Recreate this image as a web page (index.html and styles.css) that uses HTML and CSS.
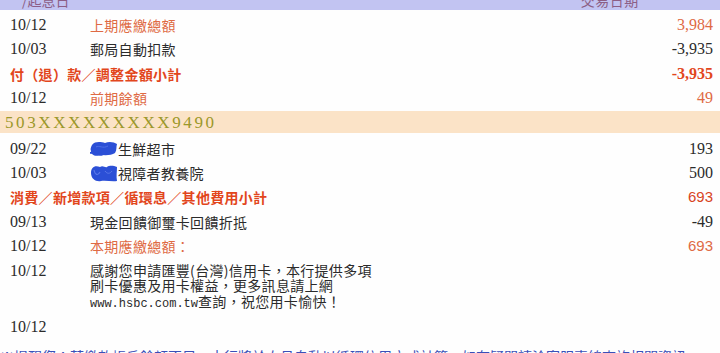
FILE: index.html
```html
<!DOCTYPE html>
<html lang="zh-Hant">
<head>
<meta charset="utf-8">
<link rel="stylesheet" href="styles.css">
</head>
<body>
<div class="head">
  <span class="head-a">/起息日</span>
  <span class="head-b">交易日期</span>
</div>
<div class="list">
  <div class="row"><span class="date">10/12</span><span class="desc hl">上期應繳總額</span><span class="amt hl">3,984</span></div>
  <div class="row"><span class="date">10/03</span><span class="desc">郵局自動扣款</span><span class="amt">-3,935</span></div>
  <div class="row sub"><span class="sub-label">付（退）款／調整金額小計</span><span class="amt sub-amt">-3,935</span></div>
  <div class="row"><span class="date">10/12</span><span class="desc hl">前期餘額</span><span class="amt hl">49</span></div>
</div>
<div class="card">503XXXXXXXXX9490</div>
<div class="list list-b">
  <div class="row"><span class="date">09/22</span><span class="desc"><svg class="blot" width="28" height="18" viewBox="0 0 28 18"><path d="M2 5 C5 1 11 2 15 3 C19 1 24 2 27 4 C26 7 27 10 25 13 C21 16 14 15 9 15 C6 17 1 15 1 11 C0 9 1 7 2 5 Z" fill="#2b4fd6"/><path d="M0 13 C4 11 7 17 13 14" stroke="#2b4fd6" stroke-width="2" fill="none"/><path d="M6 7 C9 5 13 9 18 6" stroke="#4d6ee6" stroke-width="1" fill="none"/></svg>生鮮超市</span><span class="amt">193</span></div>
  <div class="row"><span class="date">10/03</span><span class="desc"><svg class="blot" width="28" height="18" viewBox="0 0 28 18"><path d="M1 9 C1 3 5 1 10 3 C13 1 15 4 17 3 C20 1 24 2 27 3 C27 8 26 12 27 17 C22 18 16 16 11 17 C6 18 1 15 1 9 Z" fill="#2b4fd6"/><path d="M4 6 C5 11 8 12 10 8" stroke="#5a78e8" stroke-width="1.2" fill="none"/><path d="M15 7 C17 10 20 10 22 7" stroke="#5a78e8" stroke-width="1" fill="none"/></svg>視障者教養院</span><span class="amt">500</span></div>
  <div class="row sub"><span class="sub-label">消費／新增款項／循環息／其他費用小計</span><span class="amt sub-amt2">693</span></div>
  <div class="row"><span class="date">09/13</span><span class="desc">現金回饋御璽卡回饋折抵</span><span class="amt">-49</span></div>
  <div class="row"><span class="date">10/12</span><span class="desc hl">本期應繳總額：</span><span class="amt hl sans">693</span></div>
  <div class="row msg"><span class="date">10/12</span><span class="desc"><span class="line">感謝您申請匯豐(台灣)信用卡，本行提供多項</span><span class="line">刷卡優惠及用卡權益，更多訊息請上網</span><span class="line"><span class="mono">www.hsbc.com.tw</span>查詢，祝您用卡愉快！</span></span><span class="amt"></span></div>
  <div class="row"><span class="date">10/12</span><span class="desc"></span><span class="amt"></span></div>
</div>
<div class="note">※提醒您：若繳款帳戶餘額不足，本行將於次月自動以循環信用方式計算，如有疑問請洽客服專線查詢相關資訊。</div>
</body>
</html>
```

FILE: styles.css
```css
html, body {
  margin: 0;
  padding: 0;
  background: #fefefe;
  overflow: hidden;
  width: 720px;
  height: 353px;
}

body {
  font-family: "Liberation Serif", "Noto Sans CJK TC", serif;
  color: #2b2b2b;
}

.head {
  height: 10px;
  background: #c2c4f2;
  overflow: hidden;
  font-family: "Noto Sans CJK TC", sans-serif;
  font-size: 14px;
  color: #8c5f86;
}

.head-a,
.head-b {
  display: inline-block;
  line-height: 14px;
  margin-top: -7px;
  vertical-align: top;
}

.head-a {
  margin-left: 22px;
}

.head-b {
  margin-left: 508px;
  letter-spacing: 0.5px;
}

.list {
  padding-top: 3px;
}

.list-b {
  padding-top: 4px;
}

.row {
  display: grid;
  grid-template-columns: 80px 1fr auto;
  align-items: start;
  height: 24.4px;
  box-sizing: border-box;
  padding: 4px 7px 4px 10px;
  line-height: 16.4px;
}

.date {
  font-family: "Liberation Serif", serif;
  font-size: 16px;
}

.desc {
  font-family: "Noto Sans CJK TC", sans-serif;
  font-size: 14px;
  letter-spacing: 0.3px;
  display: flex;
  align-items: center;
  height: 16.4px;
}

.msg {
  height: auto;
  padding-top: 4px;
  padding-bottom: 6px;
}

.msg .desc {
  display: flex;
  flex-direction: column;
  align-items: flex-start;
  height: auto;
}

.line {
  display: block;
  height: 15.5px;
  line-height: 15.5px;
  white-space: nowrap;
}

.amt {
  font-family: "Liberation Serif", serif;
  font-size: 16px;
  text-align: right;
}

.hl {
  color: #df6a44;
}

.sub {
  grid-template-columns: 1fr auto;
}

.sub-label {
  font-family: "Noto Sans CJK TC", sans-serif;
  font-size: 14px;
  font-weight: bold;
  letter-spacing: 0.3px;
  color: #e2461c;
}

.sub-amt {
  font-weight: bold;
  color: #e2461c;
}

.sub-amt2,
.amt.sans {
  font-family: "Liberation Sans", sans-serif;
  font-size: 15px;
}

.sub-amt2 {
  color: #d8441e;
}

.card {
  height: 22px;
  line-height: 23px;
  background: #fbe3c7;
  color: #9b982a;
  font-family: "Liberation Serif", serif;
  font-size: 17px;
  letter-spacing: 2.6px;
  padding-left: 5px;
}

.blot {
  display: block;
  flex: none;
  margin: -1px 0;
}

.mono {
  font-family: "Liberation Mono", monospace;
  font-size: 12px;
  letter-spacing: 0;
}

.note {
  margin-top: 7px;
  font-family: "Noto Sans CJK TC", sans-serif;
  font-size: 14px;
  line-height: 20px;
  color: #3a4fb8;
  white-space: nowrap;
}
```
